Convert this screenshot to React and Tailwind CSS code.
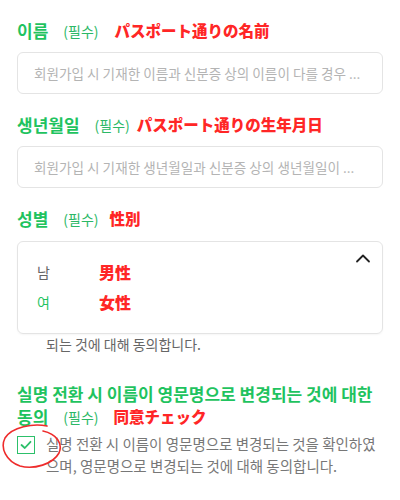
const KR = { fontFamily: '"Noto Sans CJK KR", "Noto Sans", sans-serif' };
const JP = { fontFamily: '"Noto Sans CJK JP", "Noto Sans", sans-serif' };

// gap values differ per row in the design, so they are passed in
const Label = ({ title, note, noteGap = 'ml-[16px]', className = '' }) => (
  <div className={`flex items-center h-6 ${className}`}>
    <span className="text-[17px] font-bold text-[#1fc35f]">{title}</span>
    <span className="ml-[15px] text-[14px] text-[#2cb866]">(필수)</span>
    {note && <span style={JP} className={`${noteGap} text-[15.5px] font-black text-[#ff2626] leading-none`}>{note}</span>}
  </div>
);

const TextInput = ({ placeholder, className = '' }) => (
  <div className={`h-[42px] rounded-md border border-[#e4e4e4] flex items-center px-[16px] ${className}`}>
    <span className="text-[13.6px] text-[#b4b4b4] whitespace-nowrap">{placeholder}</span>
  </div>
);

export default function App() {
  return (
    <div style={KR} className="w-[400px] h-[500px] bg-white px-[17px] pt-[19px] overflow-hidden">
      <Label title="이름" note="パスポート通りの名前" />
      <TextInput className="mt-[9px]" placeholder="회원가입 시 기재한 이름과 신분증 상의 이름이 다를 경우 ..." />

      <Label className="mt-[19px]" title="생년월일" note="パスポート通りの生年月日" noteGap="ml-[7px]" />
      <TextInput className="mt-[9px]" placeholder="회원가입 시 기재한 생년월일과 신분증 상의 생년월일이 ..." />

      <Label className="mt-[19px]" title="성별" note="性別" noteGap="ml-[11px]" />
      <div className="relative mt-[10px] h-[93px] rounded-md border border-[#e4e4e4] shadow-[0_1px_2px_rgba(0,0,0,0.04)] pl-[19px] pt-[19px]">
        <svg className="absolute right-[11px] top-[11px]" width="16" height="10" viewBox="0 0 16 10" fill="none">
          <path d="M2 8.5 L8 2.5 L14 8.5" stroke="#222" strokeWidth="1.8" strokeLinecap="round" strokeLinejoin="round" />
        </svg>
        <div className="flex items-center h-[22px]">
          <span className="w-[62px] text-[14px] text-[#666]">남</span>
          <span style={JP} className="text-[16px] font-black text-[#ff2626]">男性</span>
        </div>
        <div className="flex items-center h-[22px] mt-[8px]">
          <span className="w-[62px] text-[14px] text-[#1fc35f]">여</span>
          <span style={JP} className="text-[16px] font-black text-[#ff2626]">女性</span>
        </div>
      </div>
      <p className="pl-[29px] text-[14px] leading-[20px] text-[#666]">되는 것에 대해 동의합니다.</p>

      <div className="mt-[29px] text-[17px] font-bold text-[#1fc35f] leading-[22px] whitespace-nowrap">
        실명 전환 시 이름이 영문명으로 변경되는 것에 대한
      </div>
      <Label title="동의" note="同意チェック" noteGap="ml-[15px]" />

      <div className="relative flex mt-[4px]">
        {/* hand-drawn red ring around the checkbox */}
        <svg className="absolute -left-[16px] -top-[9px]" width="62" height="46" viewBox="0 0 62 46" fill="none">
          <path d="M46 2 C32 -1 11 3 4 14 C-1 24 5 37 19 42 C33 46 52 40 58 29 C62 20 56 10 42 7" stroke="#ee2b2b" strokeWidth="1.6" strokeLinecap="round" />
        </svg>
        <div className="w-[18px] h-[18px] mt-[3px] shrink-0 border-[1.5px] border-[#2cc06a] flex items-center justify-center">
          <svg width="12" height="10" viewBox="0 0 12 10" fill="none">
            <path d="M1.5 5 L4.8 8 L10.5 1.8" stroke="#2cc06a" strokeWidth="1.8" strokeLinecap="round" strokeLinejoin="round" />
          </svg>
        </div>
        <p className="ml-[11px] text-[14.5px] leading-[22px] text-[#777]">
          실명 전환 시 이름이 영문명으로 변경되는 것을 확인하였으며, 영문명으로 변경되는 것에 대해 동의합니다.
        </p>
      </div>
    </div>
  );
}
